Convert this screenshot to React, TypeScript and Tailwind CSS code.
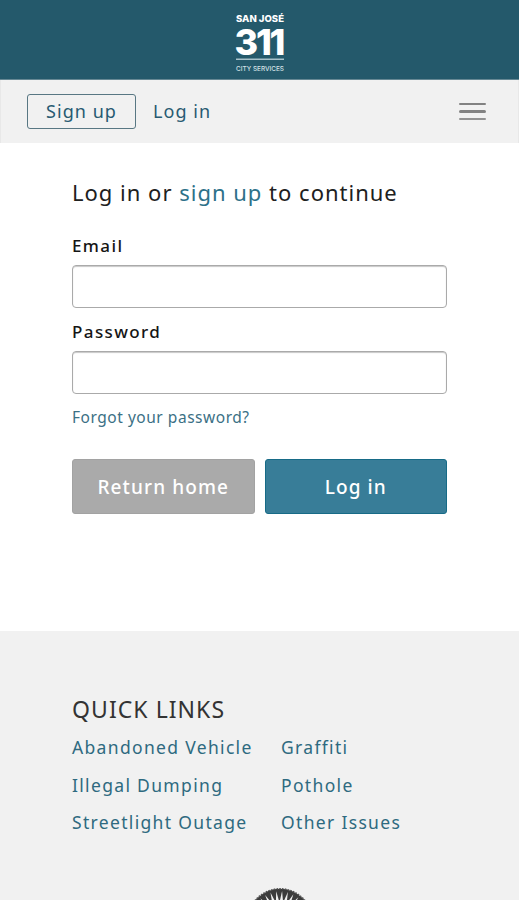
import React from "react";

const links = [
  "Abandoned Vehicle",
  "Graffiti",
  "Illegal Dumping",
  "Pothole",
  "Streetlight Outage",
  "Other Issues",
];

function Logo() {
  return (
    <svg className="overflow-visible" width="60" height="66" viewBox="-4 0 60 66" fill="#fff" fontFamily="Inter, 'Liberation Sans', sans-serif">
      <text x="2" y="10.5" fontSize="9.6" fontWeight="800" textLength="48" lengthAdjust="spacingAndGlyphs">SAN JOSÉ</text>
      <text x="0.5" y="43.5" fontSize="36" fontWeight="800" textLength="51" lengthAdjust="spacing">311</text>
      <rect x="2" y="47.6" width="48" height="1.2" fill="#c9dbe1" />
      <text x="2" y="59.6" fontSize="6.4" fontWeight="500" fill="#d4e2e7" textLength="48" lengthAdjust="spacingAndGlyphs">CITY SERVICES</text>
    </svg>
  );
}

function Seal() {
  const rays = Array.from({ length: 32 }, (_, i) => i * 11.25);
  return (
    <svg width="68" height="68" viewBox="-34 -34 68 68">
      <circle r="32.3" fill="#3c3c3c" stroke="#555" strokeWidth="1.4" strokeDasharray="1.6 1.2" />
      {rays.map((a) => (
        <path key={a} d="M-1.9 -18 L0 -30 L1.9 -18Z" fill="#f1f1f1" transform={`rotate(${a + 4})`} />
      ))}
      <circle r="18" fill="#f1f1f1" />
    </svg>
  );
}

function Field({ label, type }: { label: string; type: string }) {
  return (
    <label className="block h-[86px] text-[17px] font-medium leading-[24px] tracking-[1.4px] text-[#151515]">
      {label}
      <input
        type={type}
        className="mt-[7px] block h-[43px] w-full rounded-[4px] border border-[#aaa] bg-white shadow-[inset_0_1px_1px_#c8c8c8] outline-none"
      />
    </label>
  );
}

export default function App() {
  return (
    <div className="flex h-[900px] w-[519px] flex-col overflow-hidden bg-white font-['Noto_Sans',sans-serif]">
      <header className="flex h-[80px] shrink-0 justify-center border-b border-[#668894] bg-[#24596b] pt-[11px]">
        <Logo />
      </header>
      <nav className="flex h-[63px] shrink-0 items-center border-x border-[#e8e8e8] bg-[#f1f1f1] pl-[26px] pr-[32px] text-[18px] tracking-[1.05px] text-[#285a72]">
        <button className="flex h-[35px] w-[109px] items-center justify-center rounded-[3px] border border-[#587783]">Sign up</button>
        <a className="ml-[17px]">Log in</a>
        <div className="ml-auto flex w-[27px] flex-col gap-[5px]">
          <span className="h-[2.5px] rounded-sm bg-[#828282]" />
          <span className="h-[2.5px] rounded-sm bg-[#828282]" />
          <span className="h-[2.5px] rounded-sm bg-[#929292]" />
        </div>
      </nav>
      <main className="h-[488px] shrink-0 px-[72px] pt-[33px]">
        <h1 className="mb-[26px] whitespace-nowrap text-[22px] leading-[32px] tracking-[1px] text-[#202020]">
          Log in or <a className="text-[#2d7189]">sign up</a> to continue
        </h1>
        <Field label="Email" type="email" />
        <Field label="Password" type="password" />
        <a className="block whitespace-nowrap text-[15.5px] leading-[23px] tracking-[0.53px] text-[#3b7085]">Forgot your password?</a>
        <div className="mt-[30px] flex h-[55px] gap-[10px] text-[19px] font-medium tracking-[1.1px] text-white">
          <button className="w-[183px] rounded-[3px] border border-[#a2a2a2] bg-[#aaaaaa] pt-[2px]">Return home</button>
          <button className="w-[183px] rounded-[3px] border border-[#176b87] bg-[#387d98] pt-[2px]">Log in</button>
        </div>
      </main>
      <footer className="grow bg-[#f1f1f1] px-[72px] pt-[62px]">
        <h2 className="text-[23px] leading-[32px] tracking-[1.05px] text-[#333]">QUICK LINKS</h2>
        <div className="mt-[4px] grid grid-cols-[209px_1fr] whitespace-nowrap text-[17.5px] leading-[37.5px] tracking-[1.33px] text-[#2e6a80]">
          {links.map((l) => (
            <a key={l}>{l}</a>
          ))}
        </div>
        <div className="ml-[174px] mt-[45px]">
          <Seal />
        </div>
      </footer>
    </div>
  );
}
